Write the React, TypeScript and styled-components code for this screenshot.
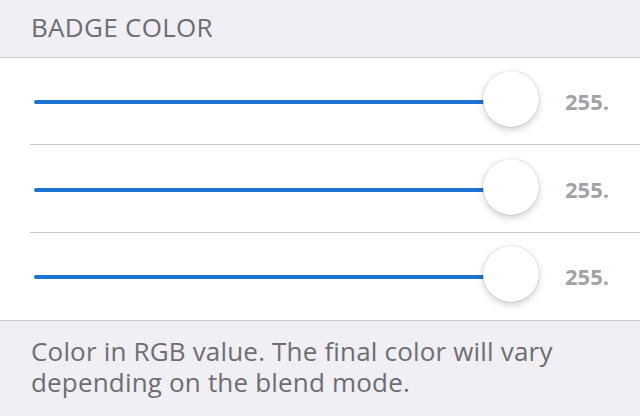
import React from "react";
import styled, { createGlobalStyle } from "styled-components";

const Global = createGlobalStyle`
  html, body { margin: 0; padding: 0; background: #efeff4; }
  body { font-family: "Open Sans", "Noto Sans", sans-serif; }
`;

const Page = styled.div`
  width: 640px;
  height: 416px;
  background: #efeff4;
  display: flex;
  flex-direction: column;
  overflow: hidden;
`;

const Header = styled.div`
  height: 58px;
  flex-shrink: 0;
  box-sizing: border-box;
  padding: 11px 0 0 31px;
  font-size: 26px;
  letter-spacing: 0.3px;
  color: #6d6d72;
  border-bottom: 1px solid #c8c7cc;
  line-height: 32px;
`;

const List = styled.div`
  background: #ffffff;
  border-bottom: 1px solid #c8c7cc;
  display: flex;
  flex-direction: column;
  flex-shrink: 0;
`;

const Row = styled.div`
  padding-left: 30px;
`;

const RowInner = styled.div<{ $last?: boolean }>`
  height: 87.4px;
  box-sizing: border-box;
  display: flex;
  align-items: center;
  padding-left: 4px;
  border-bottom: ${(p) => (p.$last ? "none" : "1px solid #c8c7cc")};
`;

const Slider = styled.div`
  position: relative;
  width: 505px;
  height: 56px;
  display: flex;
  align-items: center;
`;

const Track = styled.div`
  flex: 1;
  height: 4px;
  margin-top: 2px;
  margin-right: 28px;
  border-radius: 2px;
  background: #1b74d2;
`;

const Thumb = styled.div`
  position: absolute;
  right: 0;
  top: -2px;
  width: 56px;
  height: 56px;
  border-radius: 50%;
  background: #ffffff;
  box-shadow: 0 3px 7px rgba(0, 0, 0, 0.18), 0 0 0 0.6px rgba(0, 0, 0, 0.12);
`;

const Value = styled.div`
  margin-left: 26px;
  font-size: 22px;
  font-weight: 700;
  color: #a2a2a2;
  margin-top: 0;
`;

const Footer = styled.div`
  padding: 15px 31px 0 31px;
  font-size: 26px;
  letter-spacing: 0.18px;
  line-height: 31px;
  color: #6d6d72;
`;

const values = [255, 255, 255];

export default function App() {
  return (
    <Page>
      <Global />
      <Header>BADGE COLOR</Header>
      <List>
        {values.map((v, i) => (
          <Row key={i}>
            <RowInner $last={i === values.length - 1}>
              <Slider>
                <Track />
                <Thumb />
              </Slider>
              <Value>{v}.</Value>
            </RowInner>
          </Row>
        ))}
      </List>
      <Footer>
        Color in RGB value. The final color will vary depending on the blend mode.
      </Footer>
    </Page>
  );
}
